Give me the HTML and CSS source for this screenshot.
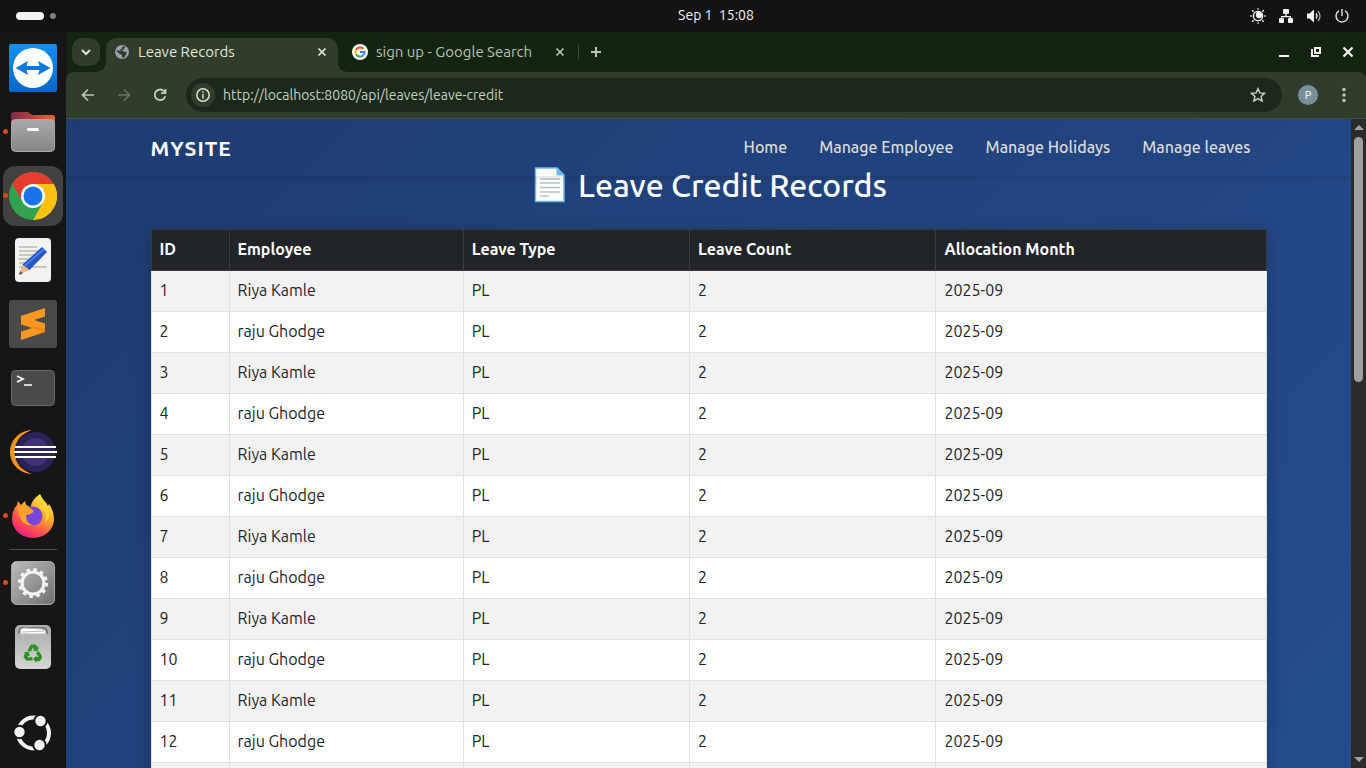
FILE: index.html
```html
<!DOCTYPE html>
<html lang="en">
<head>
<meta charset="utf-8">
<title>Leave Records</title>
<link rel="stylesheet" href="styles.css">
</head>
<body>
<header class="topbar">
  <button class="workspaces" aria-label="Workspaces"><span class="pill"></span><span class="dot"></span></button>
  <time class="clock">Sep 1&nbsp; 15:08</time>
  <div class="tray">
    <svg width="16" height="16" viewBox="0 0 16 16"><g fill="none" stroke="#f2f2f2" stroke-width="1.4"><circle cx="8" cy="8" r="4.6"/><path d="M2.300 2.300l1.400 1.400M12.300 12.300l1.400 1.400M2.300 13.700l1.400-1.400M12.300 3.700l1.400-1.400"/><path stroke="#999" stroke-width="1.800" d="M8 0v1.800M8 14.200v1.800M0 8h1.800M14.200 8h1.800"/></g><circle cx="9.200" cy="6.800" r="3.400" fill="#f2f2f2"/></svg>
    <svg width="16" height="16" viewBox="0 0 16 16" fill="#f2f2f2"><rect x="5" y="1" width="6" height="5" rx="1"/><rect x="1" y="10" width="5" height="5" rx="1"/><rect x="10" y="10" width="5" height="5" rx="1"/><path d="M7.300 6h1.400v2h4.300v2h-1.200V9.200H4.200V10H3V8h4.300z"/></svg>
    <svg width="16" height="16" viewBox="0 0 16 16"><path fill="#f2f2f2" d="M1 5.500h2.500L8 1.500v13L3.500 10.500H1z"/><path fill="none" stroke="#f2f2f2" stroke-width="1.300" d="M10 5.500q2 2.500 0 5"/><path fill="none" stroke="#aaa" stroke-width="1.300" d="M12 3q4 5 0 10"/></svg>
    <svg width="16" height="16" viewBox="0 0 16 16" fill="none" stroke="#e8e8e8" stroke-width="1.400"><path d="M8 1v7M5 2.800a6 6 0 1 0 6 0"/></svg>
  </div>
</header>
<div class="desktop">
  <nav class="dock" aria-label="Applications">
    <button class="app" aria-label="TeamViewer"><svg width="48" height="48" viewBox="0 0 48 48"><defs><linearGradient id="tv" x2="0" y2="1"><stop stop-color="#1290f0"/><stop offset="1" stop-color="#0766c9"/></linearGradient></defs><rect width="48" height="48" rx="2" fill="url(#tv)"/><circle cx="24" cy="24" r="20" fill="#fff"/><path fill="#0b78dc" d="M6.500 24L19 17l-1.500 5h13L29 17l12.500 7L29 31l1.500-5h-13L19 31z"/></svg></button>
    <button class="app running" aria-label="Files"><svg width="48" height="48" viewBox="0 0 48 48"><defs><linearGradient id="fo"><stop stop-color="#80284f"/><stop offset="1" stop-color="#ee6428"/></linearGradient><linearGradient id="gr" x2="0" y2="1"><stop stop-color="#a8a8a8"/><stop offset="1" stop-color="#868686"/></linearGradient></defs><path fill="url(#fo)" d="M5 4h14l4 3h20q3 0 3 3v8H2V7q0-3 3-3z"/><rect x="2.500" y="11.500" width="43" height="32" rx="4" fill="url(#gr)" stroke="#aaa"/><rect x="18" y="20" width="12" height="3" rx="1.500" fill="#fff"/></svg></button>
    <button class="app running focused" aria-label="Chrome"><svg width="48" height="48" viewBox="0 0 48 48"><circle cx="24" cy="24" r="24" fill="#31a350"/><path fill="#e43d30" d="M3.200 12A24 24 0 0 1 44.800 12H24L13.600 30z"/><path fill="#fdc114" d="M44.800 12A24 24 0 0 1 24 48L34.400 30 24 12z"/><circle cx="24" cy="24" r="12" fill="#fff"/><circle cx="24" cy="24" r="9.500" fill="#1a73e8"/></svg></button>
    <button class="app" aria-label="Text Editor"><svg width="48" height="48" viewBox="0 0 48 48"><rect x="6" y="2" width="36" height="44" rx="4" fill="#f2f2f2"/><path stroke="#c9c7bb" stroke-width="2" d="M10 11h18M10 15h20M10 19h17M10 23h14M10 27h10M10 31h28"/><path fill="#f3b980" d="M10 39l3.500-11 7 6z"/><path fill="#444" d="M10 39l1.200-3.800 2.600 2z"/><path fill="#2456c6" d="M13.500 28.500L33 11l5 5-17.500 18z"/><path stroke="#4a7bea" stroke-width="2" d="M16 29.500L35 13"/></svg></button>
    <button class="app" aria-label="Sublime Text"><svg width="48" height="48" viewBox="0 0 48 48"><rect width="48" height="48" rx="3" fill="#4a4a4a"/><path fill="#ff9823" d="M12 16L36 8v8.500L25 20l11 3.500V32l-24 8v-8.500L23 28l-11-3.500z"/><path fill="#e47b12" d="M12 24.500L23 28l12 4 1-.5V28l-11-1z" opacity=".5"/></svg></button>
    <button class="app" aria-label="Terminal"><svg width="48" height="48" viewBox="0 0 48 48"><rect x="2.500" y="6.500" width="43" height="35" rx="4" fill="#4b4b4b" stroke="#686868"/><path fill="none" stroke="#fff" stroke-width="1.700" d="M8 12l6 3-6 3M15 21h8"/></svg></button>
    <button class="app" aria-label="Eclipse"><svg width="48" height="48" viewBox="0 0 48 48"><path fill="#f7941e" d="M23 2A22 22 0 0 0 23 46Q6 40 6 24T23 2z"/><circle cx="26.500" cy="24" r="20.500" fill="#2c2255" stroke="#17102e"/><circle cx="26.500" cy="24" r="14" fill="#423078"/><path stroke="#2c2255" stroke-width="12" d="M8 24h38"/><path stroke="#fff" stroke-width="2.200" d="M6 19h41M5 24h43M6 29h41"/></svg></button>
    <button class="app running" aria-label="Firefox"><svg width="48" height="48" viewBox="0 0 48 48"><defs><linearGradient id="ff" x1=".8" x2=".2" y2="1"><stop stop-color="#fff44f"/><stop offset=".4" stop-color="#ffa62b"/><stop offset=".7" stop-color="#ff4f50"/><stop offset="1" stop-color="#e31587"/></linearGradient></defs><path fill="url(#ff)" d="M31 2q2 5 7 10l1 2 1-2q5 7 5 15A21 19 0 0 1 3 27Q3 18 8 13l1-4 3 4 4-4q0 5 6 6 0-7 9-13z"/><circle cx="24" cy="24" r="9.500" fill="#7a45de"/><path fill="#ffa12c" d="M9 15q7-3 12 1l4 3q-2 3-8 4 0 9 7 10-14 2-15-18z"/><path fill="#ffd735" d="M30 15q10 5 6 16 8-9 0-19z"/></svg></button>
    <hr class="dock-line">
    <button class="app running" aria-label="Settings"><svg width="48" height="48" viewBox="0 0 48 48"><defs><linearGradient id="se" x2="1" y2="1"><stop stop-color="#bcbcbc"/><stop offset="1" stop-color="#707070"/></linearGradient></defs><rect x="2.500" y="2.500" width="43" height="43" rx="5" fill="url(#se)" stroke="#aaa"/><circle cx="24" cy="24" r="11" fill="none" stroke="#f4f4f4" stroke-width="3.200"/><circle cx="24" cy="24" r="13.600" fill="none" stroke="#f4f4f4" stroke-width="2.800" stroke-dasharray="3.520 3.601"/></svg></button>
    <button class="app" aria-label="Trash"><svg width="48" height="48" viewBox="0 0 48 48"><defs><linearGradient id="tr" x2="0" y2="1"><stop stop-color="#aaa"/><stop offset="1" stop-color="#d5d5d5"/></linearGradient></defs><rect x="6" y="2" width="36" height="44" rx="5" fill="url(#tr)"/><path fill="#777" d="M9 11q0-7 4-7h22q4 0 4 7z"/><path fill="#fff" stroke="#bbb" d="M11 11l1-5 3-1 18 1 3 1 1 4zM13 9l22-1"/><g fill="#2a9220"><path id="arrow" d="M18.500 27.500L21.200 22.600Q21.800 21.500 23 21.500H26Q27 21.500 27.500 22.500L28.600 24.400 30 23.600 28.400 28.400 23.600 27.300 25 26.500 23.800 24.500 21.800 28.800z"/><use href="#arrow" transform="rotate(120 24 31)"/><use href="#arrow" transform="rotate(240 24 31)"/></g></svg></button>
    <button class="app launcher" aria-label="Show Applications"><svg width="48" height="48" viewBox="0 0 48 48"><circle cx="24.500" cy="24" r="15.500" fill="none" stroke="#f2f2f2" stroke-width="4"/><g fill="#f2f2f2" stroke="#151515" stroke-width="2"><circle cx="10.500" cy="23" r="6.200"/><circle cx="31.500" cy="12" r="6.200"/><circle cx="30.500" cy="36" r="6.200"/></g></svg></button>
  </nav>
  <div class="browser">
    <div class="tabstrip">
      <button class="tab-search" aria-label="Search tabs"><svg width="12" height="12" viewBox="0 0 12 12" fill="none" stroke="#dfe6da" stroke-width="2"><path d="M2 4l4 4 4-4"/></svg></button>
      <div class="tab active">
        <svg width="16" height="16" viewBox="0 0 16 16"><circle cx="8" cy="8" r="7" fill="#9b9fa9"/><path fill="#303d2d" d="M8.500 2.500h3.500l-2 1.500v1.500L7.500 6l2 1.500 3 .5v2l-2 3-2.500 1v-3L5 9.500 2.500 7l.5-.8 4 .8-1-1.500 2-1z"/></svg>
        <a class="tab-title" href="#">Leave Records</a>
        <button class="icon-btn" aria-label="Close tab"><svg width="10" height="10" viewBox="0 0 10 10" stroke="#e6ece2" stroke-width="1.600"><path d="M1.500 1.500l7 7M8.500 1.500l-7 7"/></svg></button>
      </div>
      <div class="tab">
        <svg width="16" height="16" viewBox="0 0 16 16" fill="none" stroke-width="2"><circle cx="8" cy="8" r="8" fill="#fff"/><path stroke="#ea4335" d="M4 5.800A4.600 4.600 0 0 1 11.300 4.800"/><path stroke="#fbbc05" d="M4 5.800A4.600 4.600 0 0 0 4 10.200"/><path stroke="#34a853" d="M4 10.200A4.600 4.600 0 0 0 11 11.500"/><path stroke="#4285f4" d="M11 11.500A4.600 4.600 0 0 0 12.600 8H8"/></svg>
        <a class="tab-title" href="#">sign up - Google Search</a>
        <button class="icon-btn" aria-label="Close tab"><svg width="10" height="10" viewBox="0 0 10 10" stroke="#b9c7b2" stroke-width="1.600"><path d="M1.500 1.500l7 7M8.500 1.500l-7 7"/></svg></button>
      </div>
      <button class="new-tab" aria-label="New tab"><svg width="12" height="12" viewBox="0 0 12 12" stroke="#b9c7b2" stroke-width="2"><path d="M6 1v10M1 6h10"/></svg></button>
      <div class="window-buttons">
        <button class="icon-btn" aria-label="Minimize"><svg width="12" height="12" viewBox="0 0 12 12" fill="#f0f3ee"><path d="M1 9h10v2H1z"/></svg></button>
        <button class="icon-btn" aria-label="Restore"><svg width="12" height="12" viewBox="0 0 12 12" fill="none" stroke="#f0f3ee" stroke-width="2"><path d="M5 2h5v5H5zM2 3v7h7"/></svg></button>
        <button class="icon-btn" aria-label="Close window"><svg width="12" height="12" viewBox="0 0 12 12" stroke="#f0f3ee" stroke-width="2.200"><path d="M1.500 1.500l9 9M10.500 1.500l-9 9"/></svg></button>
      </div>
    </div>
    <div class="toolbar">
      <button class="icon-btn" aria-label="Back"><svg width="14" height="14" viewBox="0 0 14 14" fill="none" stroke="#b9c9b1" stroke-width="1.700"><path d="M13 7H2M7 1.500L1.500 7 7 12.500"/></svg></button>
      <button class="icon-btn" aria-label="Forward"><svg width="14" height="14" viewBox="0 0 14 14" fill="none" stroke="#67745f" stroke-width="1.700"><path d="M1 7h11M7 1.500L12.500 7 7 12.500"/></svg></button>
      <button class="icon-btn" aria-label="Reload"><svg width="14" height="14" viewBox="0 0 14 14" fill="none" stroke="#b9d3ae" stroke-width="1.800"><path d="M12.200 8.200a5.300 5.300 0 1 1-1.200-5L12.500 5M12.500 1v4.200H8"/></svg></button>
      <form class="omnibox">
        <button type="button" class="site-info" aria-label="Site information"><svg width="14" height="14" viewBox="0 0 14 14" fill="none" stroke="#dae3d5" stroke-width="1.500"><circle cx="7" cy="7" r="6.200"/><path d="M7 6v4.500M7 3.200v1.600"/></svg></button>
        <input class="url" type="text" aria-label="Address" value="http://localhost:8080/api/leaves/leave-credit">
        <button type="button" class="icon-btn" aria-label="Bookmark"><svg width="16" height="16" viewBox="0 0 16 16" fill="none" stroke="#c7d0c2" stroke-width="1.500"><path d="M8 1.700l1.900 4.200 4.600.5-3.400 3.100 1 4.500L8 11.700 3.900 14l1-4.500L1.500 6.400l4.600-.5z"/></svg></button>
      </form>
      <button class="profile">P</button>
      <button class="icon-btn" aria-label="Menu"><svg width="4" height="16" viewBox="0 0 4 16" fill="#b9cdb0"><circle cx="2" cy="2.500" r="1.700"/><circle cx="2" cy="8" r="1.700"/><circle cx="2" cy="13.500" r="1.700"/></svg></button>
    </div>
    <div class="viewport">
      <div class="page">
        <nav class="navbar"><div class="container nav-inner">
          <a class="brand" href="#">MYSITE</a>
          <div class="nav-links"><a href="#">Home</a><a href="#">Manage Employee</a><a href="#">Manage Holidays</a><a href="#">Manage leaves</a></div>
        </div></nav>
        <main class="container content">
          <h1 class="title"><svg width="32" height="36" viewBox="0 0 32 36"><path fill="#fff" stroke="#6bbaea" stroke-width="1.500" d="M1.500 1H23l7 7v26.500H1.500z"/><path fill="#6bbaea" d="M22.500.5v8H30z"/><path stroke="#b3c3cc" stroke-width="1.300" d="M6 12h20M6 16h20M6 20.500h20M6 25h20M6 29h9"/></svg>Leave Credit Records</h1>
          <table class="records">
            <colgroup><col class="c-id"><col class="c-emp"><col class="c-type"><col class="c-count"><col></colgroup>
            <thead><tr><th>ID</th><th>Employee</th><th>Leave Type</th><th>Leave Count</th><th>Allocation Month</th></tr></thead>
            <tbody>
              <tr><td>1</td><td>Riya Kamle</td><td>PL</td><td>2</td><td>2025-09</td></tr>
              <tr><td>2</td><td>raju Ghodge</td><td>PL</td><td>2</td><td>2025-09</td></tr>
              <tr><td>3</td><td>Riya Kamle</td><td>PL</td><td>2</td><td>2025-09</td></tr>
              <tr><td>4</td><td>raju Ghodge</td><td>PL</td><td>2</td><td>2025-09</td></tr>
              <tr><td>5</td><td>Riya Kamle</td><td>PL</td><td>2</td><td>2025-09</td></tr>
              <tr><td>6</td><td>raju Ghodge</td><td>PL</td><td>2</td><td>2025-09</td></tr>
              <tr><td>7</td><td>Riya Kamle</td><td>PL</td><td>2</td><td>2025-09</td></tr>
              <tr><td>8</td><td>raju Ghodge</td><td>PL</td><td>2</td><td>2025-09</td></tr>
              <tr><td>9</td><td>Riya Kamle</td><td>PL</td><td>2</td><td>2025-09</td></tr>
              <tr><td>10</td><td>raju Ghodge</td><td>PL</td><td>2</td><td>2025-09</td></tr>
              <tr><td>11</td><td>Riya Kamle</td><td>PL</td><td>2</td><td>2025-09</td></tr>
              <tr><td>12</td><td>raju Ghodge</td><td>PL</td><td>2</td><td>2025-09</td></tr>
              <tr><td></td><td></td><td></td><td></td><td></td></tr>
            </tbody>
          </table>
        </main>
      </div>
      <div class="scrollbar" aria-hidden="true">
        <svg width="10" height="5" viewBox="0 0 10 5" fill="#a2a2a2"><path d="M0 5l5-5 5 5z"/></svg>
        <div class="track"><div class="thumb"></div></div>
        <svg width="10" height="5" viewBox="0 0 10 5" fill="#a2a2a2"><path d="M0 0l5 5 5-5z"/></svg>
      </div>
    </div>
  </div>
</div>
</body>
</html>
```

FILE: styles.css
```css
* { box-sizing: border-box; }
body {
  margin: 0;
  height: 100vh;
  overflow: hidden;
  display: flex;
  flex-direction: column;
  background: #131313;
  font-family: Ubuntu, "Noto Sans", sans-serif;
  font-size: 16px;
  line-height: 24px;
}
button { border: 0; padding: 0; background: none; font: inherit; color: inherit; display: flex; align-items: center; justify-content: center; }
a { color: inherit; text-decoration: none; }
svg { display: block; flex: none; }

.topbar { height: 32px; flex: none; display: grid; grid-template-columns: 1fr auto 1fr; align-items: center; padding: 0 16px; background: #131313; color: #f2f2f2; font-size: 14px; }
.workspaces { gap: 6px; justify-self: start; padding-left: 0; }
.pill { width: 28px; height: 8px; border-radius: 4px; background: #f2f2f2; }
.dot { width: 6px; height: 6px; border-radius: 50%; background: #808080; }
.clock { padding: 0 0 2px 66px; }
.tray { display: flex; gap: 12px; justify-self: end; }

.desktop { flex: 1; min-height: 0; display: flex; }
.dock { width: 66px; flex: none; display: flex; flex-direction: column; align-items: center; padding: 4px 0 3px; background: #161616; }
.app { position: relative; width: 60px; height: 60px; margin: 2px 0; border-radius: 12px; flex: none; }
.app.focused { background: #414141; }
.app.running::before { content: ""; position: absolute; left: 0; top: 27px; width: 5px; height: 5px; border-radius: 50%; background: #dd4814; }
.app.launcher { margin-top: auto; }
.dock-line { width: 48px; height: 1px; margin: 1px 0; border: 0; background: #4b4b4b; }

.browser { flex: 1; min-width: 0; display: flex; flex-direction: column; background: #152313; }
.tabstrip { height: 40px; flex: none; display: flex; align-items: center; padding: 0 8px 0 6px; color: #b4c3ad; font-size: 15px; }
.tab-search { width: 28px; height: 28px; border-radius: 10px; background: #303d2d; margin-right: 6px; }
.icon-btn { width: 20px; height: 20px; flex: none; }
.tab { position: relative; height: 34px; align-self: flex-end; display: flex; align-items: center; gap: 8px; padding: 0 6px 6px 8px; }
.tab.active { width: 232px; background: #303d2d; color: #dfe6da; border-radius: 10px 10px 0 0; }
.tab.active::before, .tab.active::after { content: ""; position: absolute; bottom: 0; width: 10px; height: 10px; }
.tab.active::before { left: -10px; background: radial-gradient(circle at 0 0, transparent 10px, #303d2d 10px); }
.tab.active::after { right: -10px; background: radial-gradient(circle at 100% 0, transparent 10px, #303d2d 10px); }
.tab:not(.active) { width: 240px; padding: 0 8px 6px 14px; }
.tab-title { flex: 1; white-space: nowrap; }
.new-tab { width: 34px; height: 16px; border-left: 1px solid #3a4936; }
.window-buttons { margin-left: auto; display: flex; gap: 12px; }

.toolbar { height: 47px; flex: none; display: flex; align-items: center; gap: 16px; padding: 0 12px; background: #303d2d; border-bottom: 1px solid #424d40; border-radius: 8px 8px 0 0; }
.omnibox { flex: 1; height: 34px; display: flex; align-items: center; padding: 0 14px 0 5px; border-radius: 17px; background: #1c291a; }
.site-info { width: 24px; height: 24px; border-radius: 50%; background: #303d2d; }
.url { flex: 1; min-width: 0; border: 0; outline: 0; padding: 0 8px; background: none; color: #c5cfc0; font: inherit; font-size: 14px; }
.profile { width: 20px; height: 20px; border-radius: 50%; background: #78909c; color: #fff; font-size: 11px; }

.viewport { flex: 1; min-height: 0; display: flex; }
.page { position: relative; flex: 1; min-width: 0; overflow: hidden; background: linear-gradient(135deg, #1e3c72, #254c8c); }
.container { width: 100%; max-width: 1140px; margin: 0 auto; padding: 0 12px; }
.navbar { position: absolute; top: 0; left: 0; right: 0; box-shadow: 0 2px 6px rgba(0, 0, 0, 0.12); }
.nav-inner { display: flex; align-items: center; justify-content: space-between; height: 57px; }
.brand { color: #fff; font-size: 21px; font-weight: 600; letter-spacing: 1px; }
.nav-links { display: flex; gap: 32px; padding: 0 16px 2px 0; color: #dadada; font-weight: 500; }
.content { padding-top: 47px; }
.title { display: flex; align-items: center; justify-content: center; gap: 12px; margin: 0 0 25px; padding-left: 4px; color: #fff; font-size: 32px; line-height: 38px; font-weight: 500; }
.records { width: 100%; table-layout: fixed; border-collapse: collapse; background: #fff; color: #212529; box-shadow: 0 4px 16px rgba(0, 0, 0, 0.2); }
.records th, .records td { height: 41px; padding: 7px 8px 9px; border: 1px solid #dee2e6; text-align: left; }
.records th { background: #212529; color: #fff; border-color: #373b3e; font-weight: 700; }
.records tbody tr:nth-child(odd) { background: #f2f2f2; }
.c-id { width: 7%; }
.c-emp { width: 21%; }
.c-type { width: 20.3%; }
.c-count { width: 22.1%; }

.scrollbar { width: 15px; flex: none; display: flex; flex-direction: column; align-items: center; gap: 7px; padding: 6px 0; background: #2b2b2b; }
.track { flex: 1; width: 9px; }
.thumb { height: 40%; border-radius: 5px; background: #9f9f9f; }
```
